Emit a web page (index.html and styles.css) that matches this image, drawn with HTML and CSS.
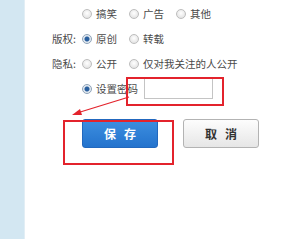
FILE: index.html
```html
<!DOCTYPE html>
<html lang="zh">
<head>
<meta charset="utf-8">
<link rel="stylesheet" href="styles.css">
</head>
<body>
<div class="page">
  <div class="sidebar"></div>
  <div class="main">
    <div class="row">
      <span class="label"></span>
      <label class="opt"><span class="radio"></span>搞笑</label>
      <label class="opt"><span class="radio"></span>广告</label>
      <label class="opt"><span class="radio"></span>其他</label>
    </div>
    <div class="row">
      <span class="label">版权:</span>
      <label class="opt"><span class="radio on"></span>原创</label>
      <label class="opt"><span class="radio"></span>转载</label>
    </div>
    <div class="row">
      <span class="label">隐私:</span>
      <label class="opt"><span class="radio"></span>公开</label>
      <label class="opt"><span class="radio"></span>仅对我关注的人公开</label>
    </div>
    <div class="row pwd">
      <span class="label"></span>
      <label class="opt"><span class="radio on"></span>设置密码</label>
      <span class="input"></span>
    </div>
    <div class="buttons">
      <button class="btn save">保&nbsp;&nbsp;&nbsp;存</button>
      <button class="btn cancel">取&nbsp;&nbsp;&nbsp;消</button>
    </div>
    <div class="mark mark-input"></div>
    <div class="mark mark-save"></div>
    <svg class="arrow" width="60" height="22" viewBox="0 0 60 22">
      <line x1="58" y1="1" x2="6" y2="17" stroke="#e3232c" stroke-width="1.2"/>
      <polygon points="1,19 9,13 11,19" fill="#e3232c"/>
    </svg>
  </div>
</div>
</body>
</html>
```
FILE: styles.css
```css
html, body {
  margin: 0;
  padding: 0;
  background: #fff;
}
body {
  font-family: "Noto Sans CJK SC", "Noto Sans", sans-serif;
  font-size: 10.5px;
  color: #4a4a4a;
}
.page {
  display: flex;
  height: 243px;
}
.sidebar {
  width: 25px;
  height: 239px;
  background: #d3e7f2;
  border-right: 1px solid #e2eef5;
  box-sizing: border-box;
}
.main {
  position: relative;
  flex: 1;
  padding-top: 1px;
}
.row {
  display: flex;
  align-items: center;
  height: 25px;
  padding-left: 27px;
}
.label {
  width: 30px;
  flex: none;
  white-space: nowrap;
}
.opt {
  display: flex;
  align-items: center;
  width: 47px;
  flex: none;
  white-space: nowrap;
}
.radio {
  width: 8px;
  height: 8px;
  border-radius: 50%;
  border: 1px solid #bdbdbd;
  background: radial-gradient(circle at 50% 40%, #fff 0, #e6e6e6 70%);
  margin-right: 4px;
  flex: none;
  box-sizing: content-box;
}
.radio.on {
  border-color: #8fa3b8;
  background: radial-gradient(circle, #2a5f9e 0, #2a5f9e 2px, #dfe7ef 3px, #eef2f6 100%);
}
.pwd .opt {
  width: 62px;
}
.pwd .input {
  width: 67px;
  height: 19px;
  border: 1px solid #c4c4c4;
  background: #fff;
}
.buttons {
  display: flex;
  gap: 25px;
  padding-left: 57px;
  margin-top: 18px;
}
.btn {
  height: 29px;
  width: 76px;
  font-family: "Noto Sans CJK SC", sans-serif;
  font-size: 12px;
  font-weight: bold;
  border-radius: 3px;
  padding: 0;
}
.save {
  background: linear-gradient(#3d8fe0, #2473cd);
  border: 1px solid #2268be;
  color: #fff;
}
.cancel {
  background: linear-gradient(#fdfdfd, #e6e6e6);
  border: 1px solid #b3b3b3;
  color: #333;
}
.mark {
  position: absolute;
  border: 2px solid #e3232c;
}
.mark-input {
  left: 101px;
  top: 77px;
  width: 94px;
  height: 25px;
}
.mark-save {
  left: 38px;
  top: 120px;
  width: 107px;
  height: 41px;
}
.arrow {
  position: absolute;
  left: 46px;
  top: 96px;
}
```
